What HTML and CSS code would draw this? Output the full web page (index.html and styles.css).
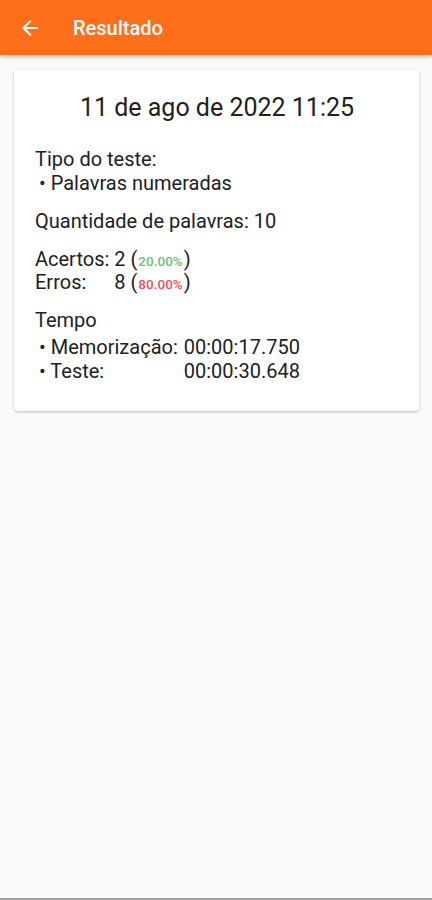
FILE: index.html
```html
<!DOCTYPE html>
<html>
<head>
  <meta charset="UTF-8">
  <title>Resultado</title>
  <link rel="stylesheet" href="styles.css">
</head>
<body>
  <div class="appbar">
    <svg class="back" width="24" height="24" viewBox="0 0 24 24"><path d="M20 11H7.83l5.59-5.59L12 4l-8 8 8 8 1.41-1.41L7.83 13H20v-2z" fill="#fff"/></svg>
    <span class="title">Resultado</span>
  </div>

  <div class="card">
    <h2 class="date">11 de ago de 2022 11:25</h2>

    <div class="section">
      <div>Tipo do teste:</div>
      <div class="item">• Palavras numeradas</div>
    </div>

    <div class="section">
      <div>Quantidade de palavras: 10</div>
    </div>

    <div class="section scores">
      <span>Acertos:</span><span>2 (<small class="ok">20.00%</small>)</span>
      <span>Erros:</span><span>8 (<small class="bad">80.00%</small>)</span>
    </div>

    <div class="section">
      <div>Tempo</div>
      <div class="times">
        <span>• Memorização:</span><span>00:00:17.750</span>
        <span>• Teste:</span><span>00:00:30.648</span>
      </div>
    </div>
  </div>
</body>
</html>
```

FILE: styles.css
```css
body { margin: 0; background: #fafafa; font-family: Roboto, "Noto Sans", sans-serif; color: #212121; height: 900px; box-sizing: border-box; border-bottom: 2px solid #9e9e9e; }
.appbar { height: 55px; background: #ff6f1a; display: flex; align-items: center; padding-left: 18px; box-shadow: 0 2px 4px rgba(0,0,0,0.25); }
.back { margin-right: 31px; }
.title { color: #fff; font-size: 20px; font-weight: 500; }
.card { margin: 15px 13px 0 14px; background: #fff; border-radius: 4px; box-shadow: 0 1px 3px rgba(0,0,0,0.25); padding: 23px 20px 28px 21px; font-size: 20px; line-height: 23.5px; }
.date { margin: 0 0 25px; text-align: center; font-size: 25px; font-weight: 400; line-height: 30px; }
.section { margin-bottom: 14.5px; }
.section:last-child { margin-bottom: 0; }
.item { padding-left: 4px; }
.scores { display: grid; grid-template-columns: auto auto; justify-content: start; column-gap: 5px; }
small { font-size: 13.5px; line-height: 0; font-weight: 500; padding: 0 1px; }
.ok { color: #6cc070; }
.bad { color: #f05060; }
.times { display: grid; grid-template-columns: auto auto; justify-content: start; column-gap: 6px; padding-left: 4px; margin-top: 3.5px; }
```
